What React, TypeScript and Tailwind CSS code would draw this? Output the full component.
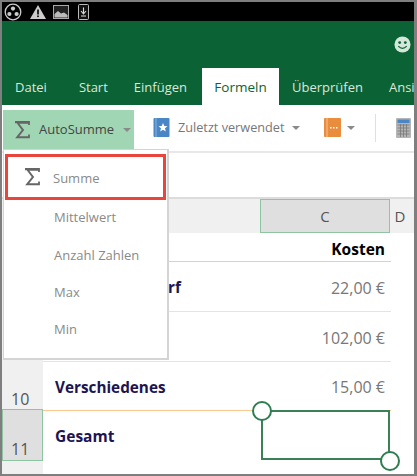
const font = { fontFamily: '"Open Sans", "Noto Sans", sans-serif' };

function Sigma({ className }: { className: string }) {
  return (
    <svg viewBox="0 0 16 16" preserveAspectRatio="none" className={className}>
      <path d="M1 1 H15 V3.5 M14.6 1.6 H3.5 L9 8 L3.2 14.4 H15 V12" fill="none" stroke="#666" strokeWidth="1.8" />
    </svg>
  );
}

function Caret() {
  return <div className="w-0 h-0 border-x-[4px] border-x-transparent border-t-[4px] border-t-[#8a8a8a]" />;
}

function Row({ label, value, border, h, bold, indent }: { label: string; value: string; border: string; h: string; bold?: boolean; indent: string }) {
  return (
    <div className={`flex items-center justify-between ${indent} pr-[6px] ${bold ? "pt-[5px]" : "pt-[2px]"} ${h} ${border}`}>
      <span className="text-[15.3px] font-bold text-[#1d1450]">{label}</span>
      <span className={bold ? "text-[15.5px] font-bold text-black" : "text-[16px] text-[#777]"}>{value}</span>
    </div>
  );
}

export default function App() {
  return (
    <div style={font} className="relative w-[417px] h-[476px] overflow-hidden bg-white border-t-2 border-l-2 border-b-2 border-r-[3px] border-[#7f7f7f] flex flex-col">
      {/* status bar */}
      <div className="h-[19px] bg-black flex items-center gap-[7px] pl-[2px] shrink-0">
        <svg viewBox="0 0 18 18" className="w-[18px] h-[18px]">
          <circle cx="9" cy="9" r="7.8" fill="none" stroke="#ccc" strokeWidth="1.3" />
          <circle cx="9" cy="5.6" r="2.1" fill="#ccc" />
          <circle cx="5.4" cy="11" r="2.1" fill="#ccc" />
          <circle cx="12.6" cy="11" r="2.1" fill="#ccc" />
        </svg>
        <svg viewBox="0 0 16 14" className="w-[16px] h-[14px] ml-[1px]">
          <path d="M8 0 L16 14 H0 Z" fill="#ccc" />
          <rect x="7.2" y="4.5" width="1.6" height="5" fill="#000" />
          <rect x="7.2" y="10.5" width="1.6" height="1.6" fill="#000" />
        </svg>
        <svg viewBox="0 0 16 14" className="w-[16px] h-[14px]">
          <rect x="0.5" y="0.5" width="15" height="13" fill="#222" stroke="#aaa" />
          <path d="M1.5 12.5 V9 L5 6 L8 8.5 L11 7.5 L14.5 10 V12.5 Z" fill="#bbb" />
        </svg>
        <svg viewBox="0 0 11 16" className="w-[11px] h-[16px] ml-[2px]">
          <rect x="0.5" y="0.5" width="10" height="15" rx="1" fill="#111" stroke="#bbb" />
          <path d="M5.5 3.5 V9 M3 7 L5.5 9.8 L8 7 M3 12 H8" stroke="#ddd" strokeWidth="1.1" fill="none" />
        </svg>
      </div>

      {/* green title and tab bar */}
      <div className="h-[84px] bg-[#0b6234] flex flex-col justify-between shrink-0">
        <div className="flex justify-end pt-[15px] pr-[3px]">
          <svg viewBox="0 0 18 18" className="w-[17px] h-[17px]">
            <circle cx="9" cy="9" r="8.5" fill="#d4e7da" />
            <circle cx="6" cy="7" r="1.5" fill="#0b6234" />
            <circle cx="12" cy="7" r="1.5" fill="#0b6234" />
            <path d="M4.5 10.8 Q9 15.5 13.5 10.8" fill="none" stroke="#0b6234" strokeWidth="1.3" />
          </svg>
        </div>
        <div className="flex items-stretch h-[37px] text-[13px] text-[#d8e8de] overflow-hidden whitespace-nowrap">
          <div className="w-[200px] shrink-0 flex items-center pt-[2px]">
            <span className="ml-[13px]">Datei</span>
            <span className="ml-[32px]">Start</span>
            <span className="ml-[26px]">Einfügen</span>
          </div>
          <div className="w-[77px] shrink-0 bg-white text-[#0b6234] text-[13.5px] flex items-center justify-center pt-[2px]">Formeln</div>
          <span className="ml-[13px] shrink-0 self-center pt-[2px]">Überprüfen</span>
          <span className="ml-[26px] shrink-0 self-center pt-[2px]">Ansicht</span>
        </div>
      </div>

      {/* ribbon */}
      <div className="h-[46px] pb-[2px] flex items-center shrink-0 whitespace-nowrap text-[13px] text-[#777] border-t border-[#fff]">
        <div className="ml-[1px] mt-[4px] w-[131px] shrink-0 h-[40px] bg-[#a0d6b4] flex items-center text-[#444]">
          <Sigma className="w-[16px] h-[18px] ml-[11px]" />
          <span className="ml-[9px] text-[13px]">AutoSumme</span>
          <span className="ml-[9px]"><Caret /></span>
        </div>
        <svg viewBox="0 0 16 19" className="w-[17px] h-[19px] ml-[19px] shrink-0">
          <rect width="16" height="19" rx="1" fill="#4a86c5" />
          <rect x="2" width="1" height="19" fill="#8db3dc" />
          <path d="M9.5 5 L10.8 8 L14 8.3 L11.5 10.3 L12.3 13.5 L9.5 11.8 L6.7 13.5 L7.5 10.3 L5 8.3 L8.2 8 Z" fill="#fff" />
        </svg>
        <span className="ml-[8px] w-[107px] shrink-0 text-[12.7px]">Zuletzt verwendet</span>
        <span className="ml-[7px]"><Caret /></span>
        <svg viewBox="0 0 17 19" className="w-[17px] h-[19px] ml-[24px] shrink-0">
          <rect width="17" height="19" rx="1" fill="#e98c3d" />
          <rect x="2.5" width="1" height="19" fill="#f5c498" />
          <rect x="6" y="9" width="1.5" height="1.5" fill="#fff" />
          <rect x="9" y="9" width="1.5" height="1.5" fill="#fff" />
          <rect x="12" y="9" width="1.5" height="1.5" fill="#fff" />
        </svg>
        <span className="ml-[6px]"><Caret /></span>
        <div className="w-[1px] h-[28px] bg-[#e0e0e0] ml-[20px] shrink-0" />
        <svg viewBox="0 0 15 20" className="w-[15px] h-[20px] ml-[20px] shrink-0">
          <rect width="15" height="20" rx="1" fill="#b5b5b5" />
          <rect x="1.5" y="1.5" width="12" height="3.5" fill="#4a86c5" />
          <path d="M1.5 7 H13.5 M1.5 10 H13.5 M1.5 13 H13.5 M1.5 16 H13.5 M4.5 6 V19 M7.5 6 V19 M10.5 6 V19" stroke="#777" strokeWidth="0.8" />
        </svg>
      </div>

      {/* formula bar space */}
      <div className="h-[48px] shrink-0 border-t-[2px] border-[#e8e8e8] border-b-[2px] border-b-[#dcdcdc]" />

      {/* sheet */}
      <div className="flex-1 flex flex-col min-h-0 relative">
        {/* column headers */}
        <div className="h-[34px] bg-[#f0f0f0] flex shrink-0 text-[#555] text-[15px]">
          <div className="w-[258px] shrink-0" />
          <div className="w-[130px] shrink-0 bg-[#dfdfdf] border border-[#8fc4a3] flex items-center justify-center">C</div>
          <div className="w-[20px] shrink-0 flex items-center justify-center">D</div>
        </div>
        <div className="flex-1 flex min-h-0">
          <div className="w-[41px] shrink-0 bg-[#f0f0f0] flex flex-col justify-end text-[#555] text-[16px] pb-[13px]">
            <div className="h-[24px] leading-[20px] flex items-end pl-[9px]">10</div>
            <div className="h-[52px] leading-[22px] bg-[#dfdfdf] border border-[#8fc4a3] flex items-end pl-[8px]">11</div>
          </div>
          <div className="w-[348px] shrink-0 flex flex-col">
            <Row label="" value="Kosten" indent="pl-[12px]" h="h-[29px]" border="border-b border-[#f3cf95]" bold />
            <Row label="rf" value="22,00 €" indent="pl-[125px]" h="h-[50px]" border="border-b-[1.5px] border-[#e4e4e4]" />
            <Row label="" value="102,00 €" indent="pl-[12px]" h="h-[50px]" border="border-b-[1.5px] border-[#e4e4e4]" />
            <Row label="Verschiedenes" value="15,00 €" indent="pl-[12px]" h="h-[49px]" border="border-b border-[#fbc98f]" />
            <div className="h-[48px] flex items-center pl-[12px] pt-[3px]">
              <span className="text-[15.5px] font-bold text-[#1d1450]">Gesamt</span>
            </div>
          </div>
        </div>

        {/* selection */}
        <div className="absolute left-[259px] top-[211px] w-[129px] h-[50px] border-2 border-[#3a8059]" />
        <div className="absolute left-[250px] top-[202px] w-[20px] h-[20px] rounded-full bg-white border-[2.5px] border-[#2f7d50]" />
        <div className="absolute left-[378px] top-[252px] w-[20px] h-[20px] rounded-full bg-white border-[2.5px] border-[#2f7d50]" />
      </div>

      {/* dropdown */}
      <div className="absolute left-[1px] top-[147px] w-[166px] h-[211px] bg-white border border-[#d4d4d4] border-r-2 border-b-2 flex flex-col text-[13px] text-[#8a8a8a] pt-[4px]">
        <div className="mx-[1px] h-[46px] border-[3px] border-[#e8453c] flex items-center shrink-0">
          <Sigma className="w-[16px] h-[18px] ml-[16px]" />
          <span className="ml-[13px] pt-[4px]">Summe</span>
        </div>
        <div className="-mt-[1px] h-[38px] flex items-center pl-[50px] shrink-0">Mittelwert</div>
        <div className="h-[37px] flex items-center pl-[50px] shrink-0">Anzahl Zahlen</div>
        <div className="h-[37px] flex items-center pl-[50px] shrink-0">Max</div>
        <div className="h-[37px] flex items-center pl-[50px] shrink-0">Min</div>
      </div>
    </div>
  );
}
